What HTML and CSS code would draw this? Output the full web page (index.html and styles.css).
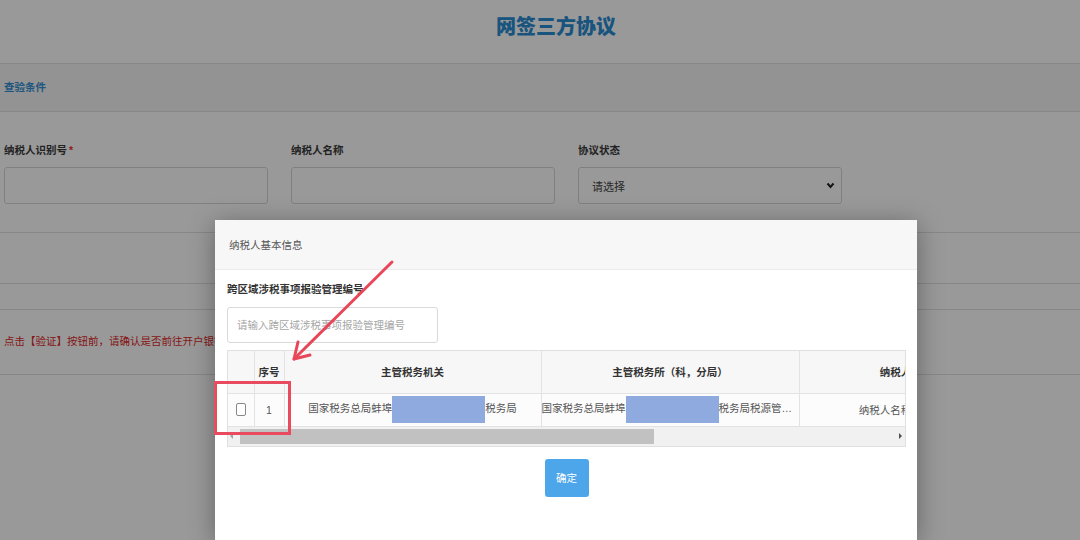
FILE: index.html
```html
<!DOCTYPE html>
<html lang="zh-CN">
<head>
    <meta charset="UTF-8">
    <title>网签三方协议</title>
    <link rel="stylesheet" href="styles.css">
</head>
<body>
    <div class="page">
        <h1 class="page-title">网签三方协议</h1>
        <div class="section-head">查验条件</div>

        <div class="query-form">
            <div class="field">
                <label>纳税人识别号<span class="req">*</span></label>
                <input class="text-input" type="text">
            </div>
            <div class="field">
                <label>纳税人名称</label>
                <input class="text-input" type="text">
            </div>
            <div class="field">
                <label>协议状态</label>
                <div class="select-box">
                    <span>请选择</span>
                    <svg width="9" height="7" viewBox="0 0 9 7"><polyline points="1.5,1.5 4.5,5 7.5,1.5" fill="none" stroke="#222" stroke-width="2"/></svg>
                </div>
            </div>
        </div>

        <div class="btn-bar"></div>
        <div class="gap-row"></div>
        <div class="notice">点击【验证】按钮前，请确认是否前往开户银行签订纸质三方协议</div>
    </div>

    <div class="mask"></div>

    <div class="modal">
        <div class="modal-head">纳税人基本信息</div>
        <div class="modal-body">
            <div class="field-label">跨区域涉税事项报验管理编号</div>
            <input class="code-input" type="text" placeholder="请输入跨区域涉税事项报验管理编号">

            <div class="grid-wrap">
                <table class="grid">
                    <colgroup>
                        <col style="width: 26px">
                        <col style="width: 30px">
                        <col style="width: 257px">
                        <col style="width: 258px">
                        <col style="width: 214px">
                    </colgroup>
                    <thead>
                        <tr>
                            <th></th>
                            <th>序号</th>
                            <th>主管税务机关</th>
                            <th>主管税务所（科，分局）</th>
                            <th>纳税人名称</th>
                        </tr>
                    </thead>
                    <tbody>
                        <tr>
                            <td><span class="chk"></span></td>
                            <td>1</td>
                            <td>国家税务总局蚌埠<span class="blur-block"></span>税务局</td>
                            <td class="cut">国家税务总局蚌埠<span class="blur-block"></span>税务局税源管理科</td>
                            <td>纳税人名称有限公司</td>
                        </tr>
                    </tbody>
                </table>
                <div class="hscroll">
                    <span class="arrow-l"></span>
                    <div class="thumb"></div>
                    <span class="arrow-r"></span>
                </div>
            </div>

            <div class="actions">
                <button class="btn-ok">确定</button>
            </div>
        </div>
    </div>

    <!-- 标注：红框 + 箭头 -->
    <div class="mark-box"></div>
    <svg class="mark-arrow" width="1080" height="540" viewBox="0 0 1080 540">
        <line x1="392" y1="262" x2="294" y2="359" stroke="#e8475a" stroke-width="3" stroke-linecap="round"/>
        <polyline points="310,355 294,359 298,342" fill="none" stroke="#e8475a" stroke-width="3" stroke-linecap="round" stroke-linejoin="round"/>
    </svg>
</body>
</html>
```

FILE: styles.css
```css
* {
    margin: 0;
    padding: 0;
    box-sizing: border-box;
}

body {
    width: 1080px;
    height: 540px;
    overflow: hidden;
    background: #fff;
    font-family: "Liberation Sans", "Noto Sans CJK SC", sans-serif;
    font-size: 10.5px;
    color: #444;
    position: relative;
}

/* 背景页面 */
.page-title {
    height: 64px;
    padding: 14px 0 0 32px;
    text-align: center;
    font-size: 20px;
    line-height: 26px;
    font-weight: 900;
    color: #2a8cd2;
    border-bottom: 1px solid #e2e2e2;
}

.section-head {
    height: 48px;
    padding-left: 4px;
    line-height: 47px;
    background: #f5f5f5;
    color: #3590d4;
    font-weight: bold;
    border-bottom: 1px solid #e2e2e2;
}

.query-form {
    display: grid;
    grid-template-columns: 264px 264px 264px;
    column-gap: 23px;
    padding: 31px 0 0 4px;
    height: 121px;
    border-bottom: 1px solid #e2e2e2;
}

.field label {
    display: block;
    height: 14px;
    line-height: 14px;
    font-weight: bold;
    color: #3a3a3a;
}

.req {
    color: #e33;
    margin-left: 2px;
}

.text-input,
.select-box {
    display: block;
    width: 264px;
    height: 37px;
    margin-top: 10px;
    border: 1px solid #d6d6d6;
    border-radius: 3px;
    background: #fff;
}

.select-box {
    display: flex;
    align-items: center;
    justify-content: space-between;
    padding: 0 6px 0 13px;
    color: #444;
    font-size: 11px;
}

.btn-bar {
    height: 51px;
    border-bottom: 1px solid #e2e2e2;
}

.gap-row {
    height: 26px;
    border-bottom: 1px solid #e2e2e2;
}

.notice {
    height: 65px;
    padding-left: 4px;
    line-height: 62px;
    color: #e02a2a;
    white-space: nowrap;
    border-bottom: 1px solid #e2e2e2;
}

.mask {
    position: absolute;
    top: 0;
    left: 0;
    right: 0;
    bottom: 0;
    background: rgba(0, 0, 0, 0.4);
}

/* 弹窗 */
.modal {
    position: absolute;
    top: 220px;
    left: 215px;
    width: 702px;
    height: 320px;
    background: #fff;
    box-shadow: 0 4px 24px rgba(0, 0, 0, 0.35);
}

.modal-head {
    height: 50px;
    padding-left: 14px;
    line-height: 50px;
    background: #f7f7f7;
    color: #555;
    border-bottom: 1px solid #ececec;
}

.modal-body {
    padding: 12px 11px 0 12px;
}

.field-label {
    height: 14px;
    line-height: 14px;
    font-weight: bold;
    color: #333;
}

.code-input {
    display: block;
    width: 211px;
    height: 36px;
    margin-top: 11px;
    padding-left: 9px;
    border: 1px solid #d9d9d9;
    border-radius: 3px;
    font-family: inherit;
    font-size: 10.5px;
}

.code-input::placeholder {
    color: #a5a5a5;
}

.grid-wrap {
    width: 679px;
    margin-top: 7px;
    border: 1px solid #e0e0e0;
    overflow: hidden;
}

.grid {
    width: 785px;
    table-layout: fixed;
    border-collapse: collapse;
}

.grid th,
.grid td {
    border-right: 1px solid #e3e3e3;
    border-bottom: 1px solid #e3e3e3;
    text-align: center;
    white-space: nowrap;
    overflow: hidden;
}

.grid th {
    height: 42px;
    background: #f7f7f7;
    color: #333;
    font-weight: bold;
}

.grid td {
    height: 33px;
    color: #555;
    background: #fcfcfc;
}

.grid td.cut {
    text-align: left;
    padding: 0;
    text-overflow: ellipsis;
}

.blur-block {
    display: inline-block;
    width: 93px;
    height: 27px;
    vertical-align: middle;
    background: #8eaadf;
}

.chk {
    display: inline-block;
    width: 10px;
    height: 13px;
    vertical-align: middle;
    border: 1px solid #888;
    border-radius: 2px;
    background: #fff;
}

.hscroll {
    height: 19px;
    display: flex;
    align-items: center;
    background: #f1f1f1;
    position: relative;
}

.thumb {
    width: 414px;
    height: 15px;
    margin-left: 7px;
    background: #c1c1c1;
}

.arrow-l,
.arrow-r {
    width: 0;
    height: 0;
    border-top: 3px solid transparent;
    border-bottom: 3px solid transparent;
}

.arrow-l {
    margin-left: 2px;
    border-right: 3px solid #a3a3a3;
}

.arrow-r {
    margin-left: auto;
    margin-right: 3px;
    border-left: 3px solid #505050;
}

.actions {
    display: flex;
    justify-content: center;
    padding-top: 12px;
}

.btn-ok {
    width: 44px;
    height: 38px;
    border: none;
    border-radius: 3px;
    background: #4ea6ea;
    color: #fff;
    font-family: inherit;
    font-size: 10.5px;
}

/* 标注 */
.mark-box {
    position: absolute;
    top: 381px;
    left: 214px;
    width: 77px;
    height: 54px;
    border: 3px solid #e84b5e;
}

.mark-arrow {
    position: absolute;
    top: 0;
    left: 0;
}
```
